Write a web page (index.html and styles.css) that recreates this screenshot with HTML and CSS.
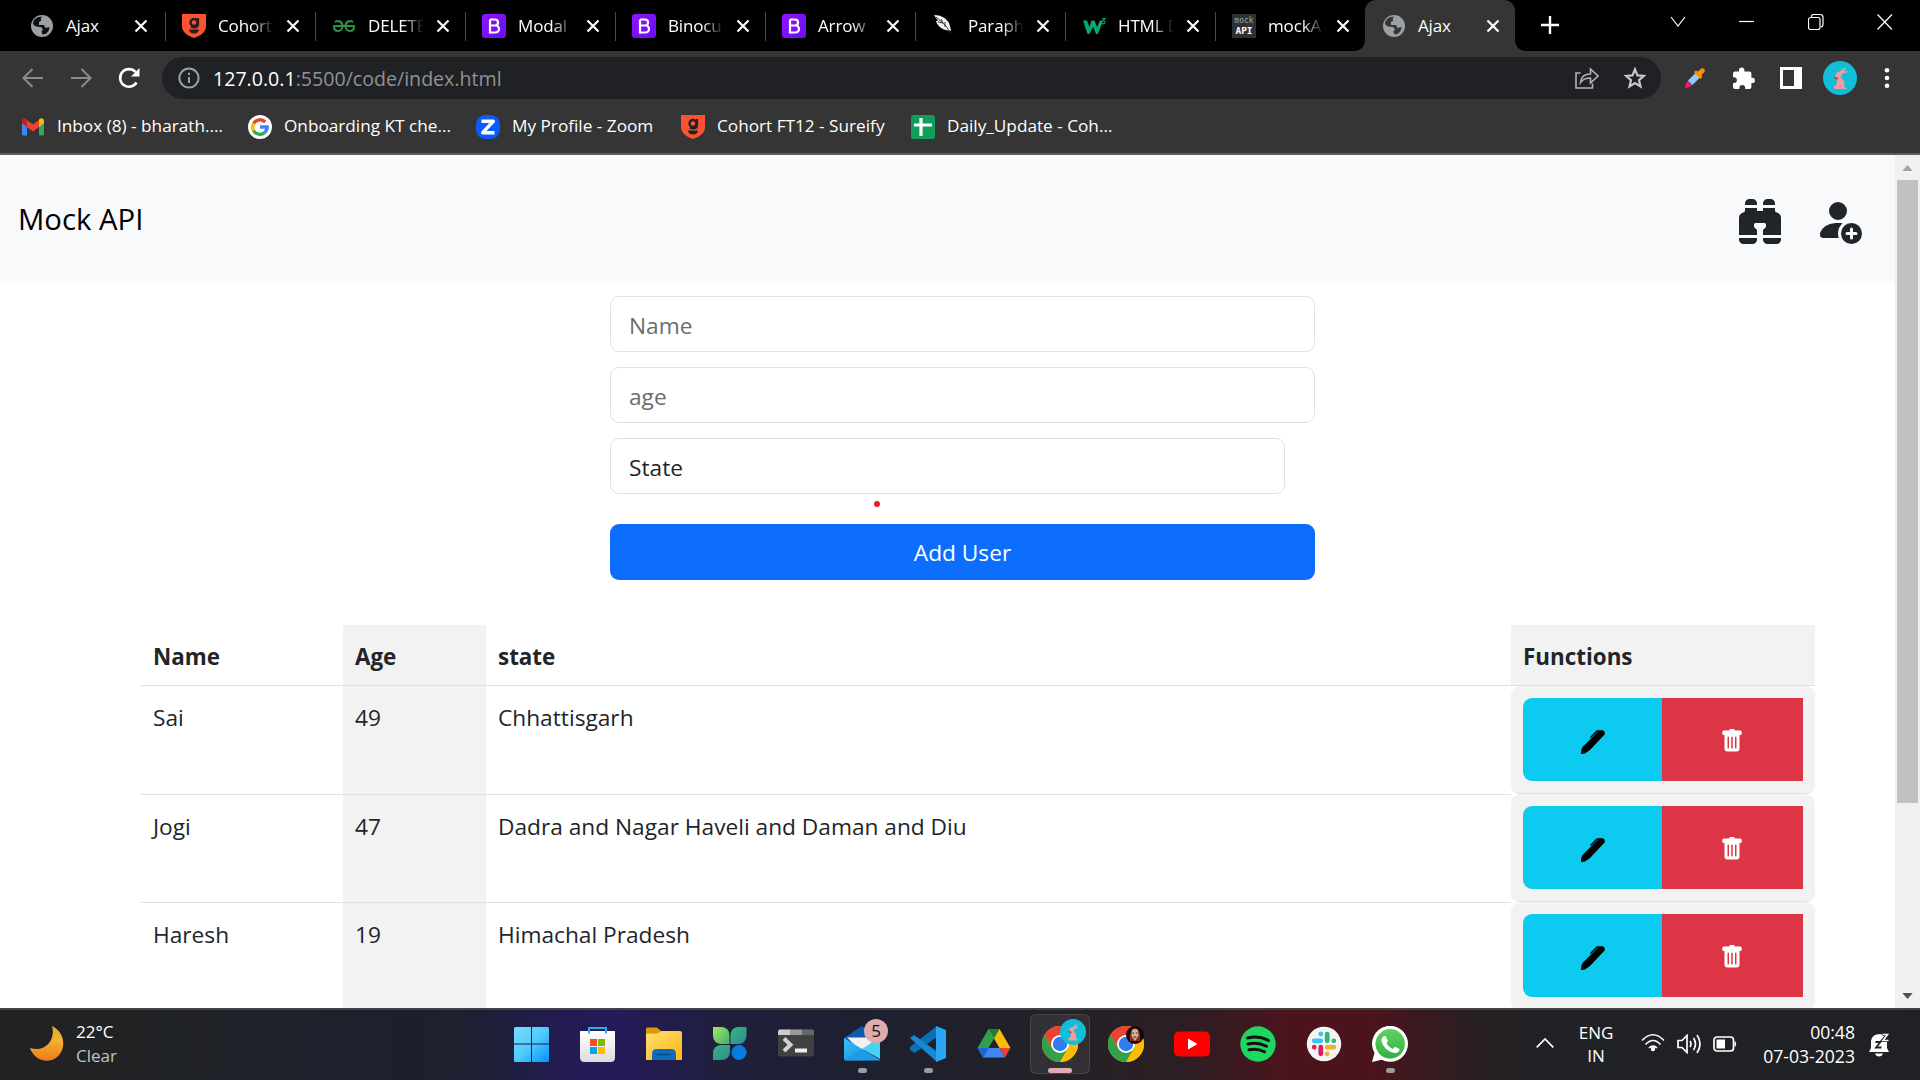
FILE: index.html
```html
<!DOCTYPE html>
<html lang="en">
<head>
<meta charset="utf-8">
<title>Ajax</title>
<link rel="stylesheet" href="styles.css">
</head>
<body>
<svg class="defs" aria-hidden="true">
  <defs>
    <linearGradient id="bs" x1="0" y1="0" x2="1" y2="1"><stop offset="0" stop-color="#9013fe"/><stop offset="1" stop-color="#6610f2"/></linearGradient>
    <linearGradient id="win" x1="0" y1="0" x2="1" y2="1"><stop offset="0" stop-color="#7fdcfc"/><stop offset=".5" stop-color="#4fcbfb"/><stop offset="1" stop-color="#0a8ffb"/></linearGradient>
    <linearGradient id="moon" x1="0" y1="0" x2="0" y2="1"><stop offset="0" stop-color="#dfa93a"/><stop offset=".4" stop-color="#f2b32e"/><stop offset="1" stop-color="#f07a1c"/></linearGradient>
    <linearGradient id="folder" x1="0" y1="0" x2="1" y2="1"><stop offset="0" stop-color="#ffdd74"/><stop offset="1" stop-color="#fcb912"/></linearGradient>
    <linearGradient id="leaf" x1="0" y1="0" x2="1" y2="1"><stop offset="0" stop-color="#a4e85c"/><stop offset="1" stop-color="#3fae70"/></linearGradient>
    <linearGradient id="leaf2" x1="0" y1="0" x2="1" y2="1"><stop offset="0" stop-color="#3cb878"/><stop offset="1" stop-color="#258a9a"/></linearGradient>
    <linearGradient id="mailf" x1="0" y1="0" x2="1" y2="1"><stop offset="0" stop-color="#35c3f5"/><stop offset="1" stop-color="#1583dd"/></linearGradient>
    <linearGradient id="bag" x1="0" y1="0" x2="0" y2="1"><stop offset="0" stop-color="#fff"/><stop offset="1" stop-color="#dcdcdc"/></linearGradient>
    <linearGradient id="wa" x1="0" y1="0" x2="0" y2="1"><stop offset="0" stop-color="#5fd164"/><stop offset="1" stop-color="#2fb242"/></linearGradient>
    <symbol id="globe" viewBox="0 0 24 24"><circle cx="12" cy="12" r="11" fill="#9aa0a6"/><path d="M13 3c-2 0-3 2-1.500 3.500L9 8v3h5l1.500 3 4-1c0 4-3 7.500-7 7.500l-1-3 1.500-2-2-2.500H6L3 10c0-4 4-8 10-7Z" fill="#000" opacity=".9"/><path d="M14 2.500l5 3.500-1 4-4-.5-1-3ZM4 12l5 1 2 3-1 4C6 19 4 16 4 12Z" fill="#9aa0a6"/></symbol>
    <symbol id="globe-active" viewBox="0 0 24 24"><circle cx="12" cy="12" r="11" fill="#9aa0a6"/><path d="M13 3c-2 0-3 2-1.500 3.500L9 8v3h5l1.500 3 4-1c0 4-3 7.500-7 7.500l-1-3 1.500-2-2-2.500H6L3 10c0-4 4-8 10-7Z" fill="#353535"/><path d="M14 2.500l5 3.500-1 4-4-.5-1-3ZM4 12l5 1 2 3-1 4C6 19 4 16 4 12Z" fill="#9aa0a6"/></symbol>
    <symbol id="shield" viewBox="0 0 24 24"><path d="M0 0h24v12c0 6-5 9.500-12 12C5 21.500 0 18 0 12Z" fill="#fb5330"/><g fill="none" stroke="#222"><circle cx="12" cy="8.500" r="3.500" stroke-width="2.400"/><path d="M16 4v6q0 3.500-4 3.500-2 0-3-.8" stroke-width="2.200"/></g><path d="M7 15.500h10q-.5 4-5 4t-5-4Z" fill="#222"/></symbol>
    <symbol id="gfg" viewBox="0 0 24 14"><path d="M1 7h22M10.500 7c0 3-2 5-4.500 5S2 10 2 7.500M3 3c3-2 7-1 7.500 4M13.500 7c0 3 2 5 4.500 5s4-2 4-4.500M21 3c-3-2-7-1-7.500 4" fill="none" stroke="#2f8d46" stroke-width="2.200"/></symbol>
    <symbol id="bootstrap" viewBox="0 0 24 24"><rect width="24" height="24" rx="3" fill="url(#bs)"/><path d="M8 5.500h5a3 3 0 0 1 0 6H8m0 0h5.500a3.500 3.500 0 0 1 0 7H8V5.500" fill="none" stroke="#fff" stroke-width="2.200"/></symbol>
    <symbol id="x" viewBox="0 0 14 14"><path d="M1.500 1.500l11 11m0-11l-11 11" stroke="#fff" stroke-width="2.200"/></symbol>
    <symbol id="pencil" viewBox="0 0 24 24"><path d="M0 24c0-4 .5-6 2.500-8L17.500 1 22 .5q2.500.5 1.500 4L9 20l-5 3.500Z" fill="#000"/><path d="M9.500 7.500L16 1h6" stroke="#000" stroke-width="1.300" fill="none"/></symbol>
    <symbol id="trash" viewBox="0 0 16 16"><path fill="#fff" d="M2.500 1a1 1 0 0 0-1 1v1a1 1 0 0 0 1 1H3v9a2 2 0 0 0 2 2h6a2 2 0 0 0 2-2V4h.5a1 1 0 0 0 1-1V2a1 1 0 0 0-1-1H10a1 1 0 0 0-1-1H7a1 1 0 0 0-1 1H2.500zm3 4a.5.5 0 0 1 .5.5v7a.5.5 0 0 1-1 0v-7a.5.5 0 0 1 .5-.5zM8 5a.5.5 0 0 1 .5.5v7a.5.5 0 0 1-1 0v-7A.5.5 0 0 1 8 5zm3 .5v7a.5.5 0 0 1-1 0v-7a.5.5 0 0 1 1 0z"/></symbol>
    <symbol id="rabbit" viewBox="0 0 34 34"><circle cx="17" cy="17" r="17" fill="#12bdd8"/><path d="M13 12.500Q14 10 17 10.500 20 6.500 23.500 7q-1 2-3 3l4.500.5q-2 2-5.500 2-.5 2-2 3 3.500 3.500 4 7l-.5 3.500 2.500.5v1.500H13Q10.500 28 10.800 26t2.700-2q-.5-3 1-4.500l-3-.8q1.500-.7 2.500-1.700l-2-2.500Z" fill="#f49aa2"/><path d="M11 15.500l5 1.500-3 2.500-1-1.500Z" fill="#a8505f"/></symbol>
    <symbol id="chrome" viewBox="0 0 36 36"><circle cx="18" cy="18" r="18" fill="#fbbc05"/><path d="M2.400 9A18 18 0 0 1 33.600 9H18L10.200 22.500Z" fill="#ea4335"/><path d="M2.400 9A18 18 0 0 0 18 36l8-13.500H10.200Z" fill="#34a047"/><path d="M18 9h15.600A18 18 0 0 1 18 36l7.800-13.500Z" fill="#fbbc05"/><circle cx="18" cy="18" r="9" fill="#fff"/><circle cx="18" cy="18" r="7.200" fill="#2f7cf0"/></symbol>
  </defs>
</svg>

<header class="tabs">
  <div class="tab"><svg class="fav"><use href="#globe"/></svg><span class="tab-title">Ajax</span><svg class="close"><use href="#x"/></svg></div>
  <div class="tab"><svg class="fav"><use href="#shield"/></svg><span class="tab-title">Cohort</span><svg class="close"><use href="#x"/></svg></div>
  <div class="tab"><svg class="fav gfg"><use href="#gfg"/></svg><span class="tab-title">DELETE</span><svg class="close"><use href="#x"/></svg></div>
  <div class="tab"><svg class="fav"><use href="#bootstrap"/></svg><span class="tab-title">Modal</span><svg class="close"><use href="#x"/></svg></div>
  <div class="tab"><svg class="fav"><use href="#bootstrap"/></svg><span class="tab-title">Binocu</span><svg class="close"><use href="#x"/></svg></div>
  <div class="tab"><svg class="fav"><use href="#bootstrap"/></svg><span class="tab-title">Arrow</span><svg class="close"><use href="#x"/></svg></div>
  <div class="tab"><svg class="fav" viewBox="0 0 24 24"><path d="M2 1c7 0 12 3 15 8l2 7-1 1-4-1c-5-1-9-5-10-9l2 0Z" fill="#f3f3f3"/><path d="M4 3l9 8 6 8M9 5l2 4M13 8v5M6 8l5 1" stroke="#333" stroke-width="1" fill="none"/></svg><span class="tab-title">Paraph</span><svg class="close"><use href="#x"/></svg></div>
  <div class="tab"><svg class="fav" viewBox="0 0 24 24"><path d="M1 6.500h4l2.500 6.500L9.500 6.500h3L15 13l3-6.500 3 0-5 13.500h-2l-3-7-3.500 7h-2Z" fill="#04aa6d"/><path d="M20 4.500h3l-2 2.300c3 0 2.500 4-1 2.700" fill="none" stroke="#04aa6d" stroke-width="1.100"/></svg><span class="tab-title">HTML D</span><svg class="close"><use href="#x"/></svg></div>
  <div class="tab"><span class="fav mock"><span>mock</span><b>API</b></span><span class="tab-title">mockA</span><svg class="close"><use href="#x"/></svg></div>
  <div class="tab active"><svg class="fav"><use href="#globe-active"/></svg><span class="tab-title">Ajax</span><svg class="close"><use href="#x"/></svg></div>
  <svg class="plus" viewBox="0 0 18 18"><path d="M9 0v18M0 9h18" stroke="#fff" stroke-width="2.400"/></svg>
  <div class="window-controls">
    <svg viewBox="0 0 16 16"><path d="M1 3l7 9 7-9" /></svg>
    <svg viewBox="0 0 16 16"><path d="M0 7.500h15"/></svg>
    <svg viewBox="0 0 16 16"><rect x=".5" y="3.500" width="11.500" height="12" rx="2"/><path d="M3.500 3.500V2.500Q3.500.5 6 .5h6q3 0 3 3v7q0 2-2 2.500"/></svg>
    <svg viewBox="0 0 16 16"><path d="M.5.500l14.500 15m0-15L.5 15.500"/></svg>
  </div>
</header>

<div class="toolbar">
  <div class="nav-row">
    <svg class="nav dim" viewBox="0 0 22 22"><path d="M21 11H2M10.500 2L1.500 11l9 9"/></svg>
    <svg class="nav dim" viewBox="0 0 22 22"><path d="M1 11h19M11.500 2l9 9-9 9"/></svg>
    <svg class="nav" viewBox="0 0 22 22"><path d="M18.500 15.500A8.800 8.800 0 1 1 17.500 5" stroke-width="2.600"/><path d="M21.500 1v8.500H13Z" fill="#fff" stroke="none"/></svg>
    <div class="omnibox">
      <svg class="info" viewBox="0 0 22 22"><circle cx="11" cy="11" r="9.600"/><path d="M11 10v6M11 5.800v2.200"/></svg>
      <span class="url"><b>127.0.0.1</b>:5500/code/index.html</span>
      <svg class="share" viewBox="0 0 24 22"><path d="M5.500 6H1v15h16.500v-4.500M5.500 15.500C6 10 9 7 15.500 7V2L23 9l-7.500 7v-5C11 11 8 12 5.500 15.500Z"/></svg>
      <svg class="star" viewBox="0 0 22 22"><path d="M11 2.300l2.500 6.100 6.400.5-4.900 4.200 1.500 6.300L11 16l-5.500 3.400L7 13.100 2.100 8.900l6.400-.5Z"/></svg>
    </div>
    <svg class="dropper" viewBox="0 0 20 20"><path d="M0 20l1-5 3-3 4 4-3 3Z" fill="#e91e63"/><path d="M3 12.500L10.500 5l4.500 4.500L7.500 17Z" fill="#90caf9"/><path d="M9 4l2-1.500 2 1L16 .7c3-1.500 4.500 1 3.500 3l-3 3.500.8 1.800-2 2Z" fill="#ff9100"/></svg>
    <svg class="puzzle" viewBox="0 0 22 22"><path d="M0 6.500Q0 4.500 2 4.500H6V3.200a2.700 2.700 0 0 1 5.400 0v1.300h5q2 0 2 2v4.300h.9a2.600 2.600 0 0 1 0 5.200h-.9V20q0 2-2 2h-4.200v-1a2.900 2.900 0 0 0-5.800 0v1H2q-2 0-2-2v-4h1a2.900 2.900 0 0 0 0-5.800H0Z" fill="#fff"/></svg>
    <svg class="panel" viewBox="0 0 22 22"><path d="M1.500 1.500h19v19h-19Z" fill="none" stroke="#fff" stroke-width="3"/><path d="M14 1h7.500v20H14Z" fill="#fff"/></svg>
    <svg class="avatar"><use href="#rabbit"/></svg>
    <svg class="dots" viewBox="0 0 6 22"><circle cx="3" cy="3.200" r="2.300"/><circle cx="3" cy="11" r="2.300"/><circle cx="3" cy="18.800" r="2.300"/></svg>
  </div>
  <div class="bookmarks">
    <span class="bookmark b1"><svg viewBox="0 0 24 24"><path d="M1 8v11q0 1.500 1.500 1.500H6V11Z" fill="#4285f4"/><path d="M23 8v11q0 1.500-1.500 1.500H18V11Z" fill="#34a853"/><path d="M18 5v7l5-3.800V6c0-3-3-3.500-4.500-2Z" fill="#fbbc04"/><path d="M6 12V5l6 4.500L18 5v7l-6 4.500Z" fill="#ea4335"/><path d="M1 6v2.200L6 12V5L5.500 4C4 2.500 1 3 1 6Z" fill="#c5221f"/></svg><span>Inbox (8) - bharath....</span></span>
    <span class="bookmark b2"><svg viewBox="0 0 24 24"><circle cx="12" cy="12" r="12" fill="#fff"/><g fill="none" stroke-width="3.300"><path d="M5.600 8.500A7.300 7.300 0 0 1 17.200 7" stroke="#ea4335"/><path d="M5.600 8.300a7.300 7.300 0 0 0 0 7.400" stroke="#fbbc05"/><path d="M5.500 15.500A7.300 7.300 0 0 0 16.800 17.500" stroke="#34a853"/><path d="M16.600 17.700A7.300 7.300 0 0 0 19.200 12H12" stroke="#4285f4"/></g></svg><span>Onboarding KT che...</span></span>
    <span class="bookmark b3"><svg viewBox="0 0 24 24"><rect width="24" height="24" rx="9.500" fill="#0b5cff"/><path d="M5.500 6.300h11.800L6.700 17.700h11.800" fill="none" stroke="#fff" stroke-width="3.400" stroke-linejoin="round"/></svg><span>My Profile - Zoom</span></span>
    <span class="bookmark b4"><svg><use href="#shield"/></svg><span>Cohort FT12 - Sureify</span></span>
    <span class="bookmark b5"><svg viewBox="0 0 24 24"><rect width="24" height="24" rx="2.500" fill="#109d58"/><path d="M10 3v18M3 10h18" stroke="#fff" stroke-width="3.200"/></svg><span>Daily_Update - Coh...</span></span>
  </div>
</div>

<div class="viewport">
  <main class="page">
    <nav class="navbar">
      <span class="brand">Mock API</span>
      <div class="nav-icons">
        <svg viewBox="0 0 16 16"><path d="M4.500 1A1.500 1.500 0 0 0 3 2.500V3h4v-.5A1.500 1.500 0 0 0 5.500 1h-1zM7 4v1h2V4h4v.882a.5.5 0 0 0 .276.447l.895.447A1.500 1.500 0 0 1 15 7.118V13H9v-1.500a.5.5 0 0 1 .146-.354l.854-.853V9.500a.5.5 0 0 0-.5-.5h-3a.5.5 0 0 0-.5.5v.793l.854.853A.5.5 0 0 1 7 11.500V13H1V7.118a1.500 1.500 0 0 1 .83-1.342l.894-.447A.5.5 0 0 0 3 4.882V4h4zM1 14v.5A1.500 1.500 0 0 0 2.500 16h3A1.500 1.500 0 0 0 7 14.500V14H1zm8 0v.5a1.500 1.500 0 0 0 1.500 1.500h3a1.500 1.500 0 0 0 1.500-1.500V14H9zm4-11H9v-.5A1.500 1.500 0 0 1 10.500 1h1A1.500 1.500 0 0 1 13 2.500V3z"/></svg>
        <svg viewBox="0 0 16 16"><path d="M12.500 16a3.500 3.500 0 1 0 0-7 3.500 3.500 0 0 0 0 7Zm.5-5v1h1a.5.5 0 0 1 0 1h-1v1a.5.5 0 0 1-1 0v-1h-1a.5.5 0 0 1 0-1h1v-1a.5.5 0 0 1 1 0Zm-2-6a3 3 0 1 1-6 0 3 3 0 0 1 6 0Z"/><path d="M2 13c0 1 1 1 1 1h5.256A4.493 4.493 0 0 1 8 12.500a4.490 4.490 0 0 1 1.544-3.393C9.077 9.038 8.564 9 8 9c-5 0-6 3-6 4Z"/></svg>
      </div>
    </nav>

    <form class="user-form">
      <input class="field" type="text" placeholder="Name">
      <input class="field" type="text" placeholder="age">
      <div class="select-wrap">
        <div class="field select">State</div>
        <i class="marker"></i>
      </div>
      <button class="submit" type="button">Add User</button>
    </form>

    <section class="table">
      <div class="row head"><div>Name</div><div class="shade">Age</div><div>state</div><div class="shade">Functions</div></div>
      <div class="row"><div>Sai</div><div class="shade">49</div><div>Chhattisgarh</div>
        <div class="actions"><button type="button" class="edit"><svg><use href="#pencil"/></svg></button><button type="button" class="delete"><svg><use href="#trash"/></svg></button></div></div>
      <div class="row"><div>Jogi</div><div class="shade">47</div><div>Dadra and Nagar Haveli and Daman and Diu</div>
        <div class="actions"><button type="button" class="edit"><svg><use href="#pencil"/></svg></button><button type="button" class="delete"><svg><use href="#trash"/></svg></button></div></div>
      <div class="row"><div>Haresh</div><div class="shade">19</div><div>Himachal Pradesh</div>
        <div class="actions"><button type="button" class="edit"><svg><use href="#pencil"/></svg></button><button type="button" class="delete"><svg><use href="#trash"/></svg></button></div></div>
    </section>
  </main>
  <div class="scrollbar">
    <svg class="arrow-up" viewBox="0 0 12 7"><path d="M6 0l6 7H0Z" fill="#a3a3a3"/></svg>
    <div class="thumb"></div>
    <svg class="arrow-down" viewBox="0 0 12 7"><path d="M0 0h12L6 7Z" fill="#505050"/></svg>
  </div>
</div>

<footer class="taskbar">
  <div class="weather">
    <svg viewBox="0 0 34 35"><path d="M22 0C37 7 37 28 22 34 12 37 3 31 0 22 15 27 26 14 22 0Z" fill="url(#moon)"/></svg>
    <div><div>22°C</div><div class="sky">Clear</div></div>
  </div>
  <div class="apps">
    <span class="app"><svg viewBox="0 0 36 36"><path d="M0 2.500Q0 1 1.500 1H17v16.500H0ZM18 1H33.500q1.500 0 1.500 1.500v15H18ZM0 18.500H17V36H1.500Q0 36 0 34.500ZM18 18.500h17v16q0 1.500-1.500 1.500H18Z" fill="url(#win)"/></svg></span>
    <span class="app"><svg viewBox="0 0 36 36"><path d="M0 5h35V31.500q0 4.500-4.500 4.500h-26Q0 36 0 31.500Z" fill="url(#bag)"/><path d="M9 7.500V2h17v5.500" fill="none" stroke="#25aef0" stroke-width="2"/><path d="M10 13h7v7h-7Z" fill="#f25022"/><path d="M18 13h7v7h-7Z" fill="#7fba00"/><path d="M10 21h7v7h-7Z" fill="#00a4ef"/><path d="M18 21h7v7h-7Z" fill="#ffb900"/></svg></span>
    <span class="app"><svg viewBox="0 0 36 36"><path d="M0 10V3q0-1.500 1.500-1.500H11l4 3.500v5Z" fill="#dc9a06"/><path d="M0 7.500h12L15.500 5H34q2 0 2 2v27H0Z" fill="url(#folder)"/><path d="M6 34v-6q0-5 5-5h14q5 0 5 5v6Z" fill="#0f6cbd"/><path d="M11 28.500h14" stroke="#0a4584" stroke-width="1.500"/></svg></span>
    <span class="app"><svg viewBox="0 0 36 36"><path d="M17.500 18H9a8 8 0 0 1-8-8V1h8.500a8 8 0 0 1 8 8Z" fill="url(#leaf)"/><path d="M18.500 18V9a8 8 0 0 1 8-8h8v9a8 8 0 0 1-8 8Z" fill="url(#leaf2)"/><path d="M1 34V27a8 8 0 0 1 8-8h9v7a8 8 0 0 1-8 8Z" fill="url(#leaf2)"/><circle cx="27" cy="26.500" r="7.500" fill="#087be0"/></svg></span>
    <span class="app"><svg viewBox="0 0 36 36"><rect y="3.500" width="36" height="27" rx="2" fill="#414141"/><path d="M0 9V5.500q0-2 2-2h10V9Z" fill="#ccc"/><path d="M12 3.500h12V9H12Z" fill="#999"/><path d="M24 3.500h10q2 0 2 2V9H24Z" fill="#666"/><path d="M6 12.500l6.500 6.200L6 25" fill="none" stroke="#d2d2d2" stroke-width="4"/><path d="M17 22.500h12v4H17Z" fill="#eee"/></svg></span>
    <span class="app dot"><svg viewBox="0 0 36 36"><path d="M0 12L18 0l18 12v10H0Z" fill="#0b5cb0"/><path d="M3 11.500h30L18 26Z" fill="#f1f1f1"/><path d="M0 12l36 22q-.5.500-2 .5H2q-2 0-2-2Z" fill="url(#mailf)"/><path d="M36 12v21L18 22.800Z" fill="#4bd0f3"/><path d="M0 34.200L18 22.800 36 34.200Z" fill="#1d9be6"/></svg><span class="badge">5</span></span>
    <span class="app dot"><svg viewBox="0 0 36 36"><path d="M27 0v11L4.500 27 0 24v-3Z" fill="#0a70b8"/><path d="M0 12l4-3 23 16.500V36Z" fill="#1589d3"/><path d="M26 0l10 4v28l-10 4Z" fill="#2aa6f2"/></svg></span>
    <span class="app"><svg viewBox="0 0 36 36"><path d="M12.500 3h11L12.500 22 7 31.500 1.500 22Z" fill="#2fa04b"/><path d="M12.500 3h11L34.500 22h-11L18 12.500Z" fill="#fbbc09"/><path d="M12.500 3h11L18 12.500Z" fill="#188038"/><path d="M7 31.500L12.500 22h11l5.500 9.500Z" fill="#4285f4"/><path d="M1.500 22h11L7 31.500Z" fill="#2163d0"/><path d="M23.500 22h11L29 31.500Z" fill="#ea4335"/></svg></span>
    <span class="app current"><svg><use href="#chrome"/></svg><svg class="profile big"><use href="#rabbit"/></svg></span>
    <span class="app"><svg><use href="#chrome"/></svg><svg class="profile" viewBox="0 0 18 18"><circle cx="9" cy="9" r="9" fill="#100a09"/><path d="M4 15Q3 3 9 2q6 1 5 13Z" fill="#a91e1c"/><path d="M6 4q3-2 6 0l.5 6L9 15 5.500 10Z" fill="#c7b6a2"/><path d="M6.500 7H8m2 0h1.500M7.500 11h3" stroke="#222"/></svg></span>
    <span class="app"><svg viewBox="0 0 36 36"><rect y="5.500" width="36" height="25" rx="5" fill="#f00"/><path d="M14 12.500l9.500 5.500-9.500 5.500Z" fill="#fff"/></svg></span>
    <span class="app"><svg viewBox="0 0 36 36"><circle cx="18" cy="18" r="17.700" fill="#1ed760"/><path d="M7.500 12q11-3 21 2.500M8 18q10-2.500 18.500 2.300M9 23.800q8-2 15.500 2" fill="none" stroke="#111" stroke-width="3" stroke-linecap="round"/></svg></span>
    <span class="app"><svg viewBox="0 0 36 36"><circle cx="18" cy="18" r="17.200" fill="#f5f4f5"/><g stroke-width="4.800" stroke-linecap="round"><path d="M14.800 8v.01M8.200 14.800h6.600" stroke="#36c5f0"/><path d="M21.200 8.200v6.600M27.800 14.800v.01" stroke="#2eb67d"/><path d="M21.200 21.200h6.600M21.200 27.800v.01" stroke="#ecb22e"/><path d="M14.800 21.200v6.600M8.200 21.200v.01" stroke="#e01e5a"/></g></svg></span>
    <span class="app dot"><svg viewBox="0 0 36 36"><path d="M0 36l2.500-9A18 18 0 1 1 9.500 33.700Z" fill="#fff"/><circle cx="18.200" cy="17.800" r="14.700" fill="url(#wa)"/><path d="M9.500 13.500q1-4 4-3.500l2.500 5-1.500 2.500q2.500 4 6.500 5.500l2-2.200 4.500 2.200q0 4-4.500 4C16 26.500 9 19 9.500 13.500Z" fill="#fff"/></svg></span>
  </div>
  <div class="tray">
    <svg class="chev" viewBox="0 0 18 10"><path d="M.7 9.300L9 1l8.300 8.300"/></svg>
    <div class="lang"><div>ENG</div><div>IN</div></div>
    <svg class="wifi" viewBox="0 0 24 20"><path d="M1 7.500q11-11.500 22 0M4.500 11.500q7.500-8 15 0M8 15q4-4 8 0"/><circle cx="12" cy="16" r="2.200" class="solid"/></svg>
    <svg class="sound" viewBox="0 0 24 20"><path d="M1 6.500h4L10 1.500v17l-5-5H1ZM13 7q2 3 0 6M16.500 4q4 6 0 12M20 1q6 9 0 18"/></svg>
    <svg class="battery" viewBox="0 0 24 16"><rect x="1" y="1" width="19.500" height="14" rx="3"/><path d="M3.500 3.500h8.500v9H3.500ZM21.500 5.500h1q1.500 2.500 0 5h-1Z" class="solid"/></svg>
    <div class="clock"><div>00:48</div><div>07-03-2023</div></div>
    <svg class="bell" viewBox="0 0 22 24"><path d="M1 19l2-4V8q1-7 9-7 6 1 7 6v8l2 4Z" fill="#fff"/><path d="M7 20.500h8q-1 3-4 3t-4-3Z" fill="#fff"/><path d="M7.500 9h5l-4.500 5.500h5.500" fill="none" stroke="#202124" stroke-width="1.800"/><path d="M14.500 1h6l-5 6h5.500" fill="none" stroke="#202124" stroke-width="4"/><path d="M14.500 1.500h5l-4.500 6h5.500" fill="none" stroke="#fff" stroke-width="1.600"/></svg>
  </div>
</footer>
</body>
</html>
```
FILE: styles.css
```css
* { box-sizing: border-box; }
body {
  margin: 0;
  width: 1920px;
  height: 1080px;
  overflow: hidden;
  display: flex;
  flex-direction: column;
  font-family: "Open Sans", "Noto Sans", sans-serif;
  background: #fff;
}
svg { flex: none; display: block; }
.defs { position: absolute; width: 0; height: 0; }

/* tab strip */
.tabs { height: 51px; flex: none; display: flex; background: #000; padding-left: 14px; color: #fff; }
.tab { position: relative; width: 150px; height: 51px; flex: none; display: flex; align-items: center; padding-left: 17px; }
.tab:first-child { width: 151px; padding-left: 16px; }
.tab::after { content: ""; position: absolute; right: -1px; top: 12px; width: 1px; height: 29px; background: #4a4a4a; }
.tab:nth-child(9)::after, .tab.active::after { display: none; }
.fav { width: 24px; height: 24px; margin-top: 1px; }
.gfg { height: 14px; }
.tab-title {
  width: 57px; margin-left: 12px; overflow: hidden; white-space: nowrap;
  font-size: 17px; line-height: 26px; letter-spacing: -.15px;
  -webkit-mask-image: linear-gradient(to right, #000 60%, transparent 98%);
  mask-image: linear-gradient(to right, #000 60%, transparent 98%);
}
.tab:first-child .tab-title, .tab.active .tab-title { -webkit-mask-image: none; mask-image: none; }
.close { width: 14px; height: 14px; margin-left: 11px; }
.tab.active { background: #353535; border-radius: 11px 11px 0 0; }
.tab.active::before {
  content: ""; position: absolute; left: -10px; right: -10px; bottom: 0; height: 10px;
  background:
    radial-gradient(circle at 0 0, transparent 9.500px, #353535 10px) left / 10px 10px no-repeat,
    radial-gradient(circle at 100% 0, transparent 9.500px, #353535 10px) right / 10px 10px no-repeat;
}
.mock {
  background: #2f3032; display: flex; flex-direction: column; align-items: center; justify-content: center;
  font: 8px/10px "DejaVu Sans Mono", monospace; color: #9aa; flex: none;
}
.mock b { color: #fff; font-size: 9.500px; }
.plus { width: 18px; height: 18px; margin: 16px 0 0 26px; }
.window-controls { display: flex; gap: 53px; margin: 14px 27px 0 auto; }
.window-controls svg { width: 16px; height: 16px; fill: none; stroke: #fff; stroke-width: 1.200; }

/* toolbar */
.toolbar { height: 104px; flex: none; background: #353535; border-bottom: 2px solid #5e5e5e; color: #fff; }
.nav-row { height: 54px; display: flex; align-items: center; padding: 0 30px 0 22px; }
.nav { width: 22px; height: 22px; margin-right: 26px; fill: none; stroke: #fff; stroke-width: 2; }
.nav.dim { stroke: #8b8b8b; }
.nav:nth-child(3) { margin-right: 23px; }
.omnibox { width: 1500px; height: 42px; border-radius: 21px; background: #202124; display: flex; align-items: center; padding: 0 15px 0 16px; margin-left: -1px; }
.info { width: 22px; height: 22px; margin-right: 13px; fill: none; stroke: #9aa0a6; stroke-width: 2; }
.url { flex: 1; font-size: 19.600px; color: #8f9296; padding-top: 1px; }
.url b { font-weight: 400; color: #fff; }
.share { width: 24px; height: 22px; margin-right: 25px; fill: none; stroke: #b4b4b4; stroke-width: 1.600; }
.star { width: 22px; height: 22px; fill: none; stroke: #c8c8c8; stroke-width: 2.200; }
.dropper { width: 20px; height: 20px; margin-left: 24px; }
.puzzle { width: 22px; height: 22px; margin-left: 28px; }
.panel { width: 22px; height: 22px; margin-left: 25px; }
.avatar { width: 34px; height: 34px; margin-left: 21px; }
.dots { width: 6px; height: 22px; margin-left: 27px; fill: #fff; }
.bookmarks { display: flex; height: 43px; align-items: center; padding-left: 21px; font-size: 17.200px; white-space: nowrap; }
.bookmark { display: flex; align-items: center; gap: 12px; }
.bookmark svg { width: 24px; height: 24px; }
.bookmark span { padding-bottom: 2px; }
.b1 { width: 227px; } .b2 { width: 228px; } .b3 { width: 205px; } .b4 { width: 230px; }

/* page */
.viewport { height: 853px; flex: none; display: flex; overflow: hidden; }
.page { width: 1895px; height: 853px; overflow: hidden; color: #212529; font-size: 22.700px; }
.navbar { height: 126px; background: #f8f9fb; display: flex; align-items: center; justify-content: space-between; padding: 0 33px 0 18px; }
.brand { font-size: 29.300px; color: #000; padding-top: 2px; }
.nav-icons { display: flex; gap: 30px; margin-top: 4px; }
.nav-icons svg { width: 48px; height: 48px; fill: #212529; }
.user-form { width: 705px; margin: 15px 0 0 610px; display: flex; flex-direction: column; gap: 15px; }
.field {
  width: 100%; height: 56px; padding: 2px 18px 0; border: 1px solid #dee2e6; border-radius: 9px;
  background: #fff; font: inherit; color: #212529; outline: none;
}
.field::placeholder { color: #696d70; opacity: 1; }
.select { width: 675px; line-height: 54px; }
.select-wrap { position: relative; height: 71px; }
.marker { position: absolute; left: 264px; top: 63px; width: 6px; height: 6px; border-radius: 50%; background: #ed1c24; }
.submit { height: 56px; border: 0; border-radius: 9px; background: #0d6efd; color: #fff; font: inherit; padding: 1px 0 0; }

.table { width: 1674px; margin: 45px 0 0 141px; }
.row { display: grid; grid-template-columns: 202px 143px 1025px 304px; height: 108px; line-height: 36px; }
.row > div { padding: 14px 12px 0; border-bottom: 1px solid #dee2e6; }
.row.head { height: 61px; font-weight: 700; font-size: 22.400px; }
.row:nth-child(2) { height: 109px; }
.row > .shade { background: #f2f2f2; border-bottom-color: #dfe0e1; }
.row > .actions { display: flex; height: 108px; padding: 12px; background: #f2f2f2; border-radius: 9px; border-bottom-color: #dfe0e1; }
.row:nth-child(n+3) > .actions { margin-top: -1px; }
.actions button { height: 83px; border: 0; padding: 0; display: flex; align-items: center; justify-content: center; }
.edit { width: 139px; background: #0dcaf0; border-radius: 9px 0 0 9px; }
.delete { width: 141px; background: #dc3545; }
.actions svg { width: 24px; height: 24px; margin-top: 4px; }
.delete svg { margin: 2px 1px 0 0; }

.scrollbar { width: 25px; background: #f1f1f1; display: flex; flex-direction: column; align-items: center; padding: 10px 0 9px; }
.scrollbar svg { width: 11px; height: 6px; }
.thumb { width: 21px; height: 623px; margin: 9px 0 auto; background: #c1c1c1; }

/* taskbar */
.taskbar {
  position: relative; height: 72px; flex: none; display: flex; border-top: 2px solid #424247; color: #fff;
  background: linear-gradient(to right, #222222 0, #202225 150px, #1d212c 330px, #1c2030 470px, #231b55 570px, #241b58 620px, #1f1f3c 720px, #1d2030 860px, #222128 1040px, #2b1f23 1180px, #4b141d 1290px, #4b141c 1370px, #291f22 1470px, #212226 1540px, #202124 1920px);
}
.weather { width: 511px; display: flex; padding-left: 30px; }
.weather svg { width: 34px; height: 35px; margin: 16px 12px 0 0; }
.weather, .clock, .lang { font-size: 17px; line-height: 24px; }
.weather > div, .clock, .lang { padding-top: 10px; }
.sky { color: #c3c3c3; }
.apps { display: flex; gap: 6px; margin-left: -9px; }
.app { position: relative; width: 60px; height: 60px; margin-top: 4px; padding: 12px; border-radius: 6px; }
.app > svg { width: 36px; height: 36px; }
.app.dot::after { content: ""; position: absolute; left: 26px; top: 54px; width: 9px; height: 5px; border-radius: 3px; background: #9b9ba1; }
.app.current { background: rgba(255,255,255,.07); border: 1px solid rgba(255,255,255,.1); padding: 11px; }
.app.current::after { content: ""; position: absolute; left: 17px; top: 53px; width: 24px; height: 5px; border-radius: 3px; background: #e0adb1; }
.badge { position: absolute; left: 32px; top: 5px; width: 24px; height: 24px; border-radius: 50%; background: #dfabad; color: #111; font-size: 17px; line-height: 24px; text-align: center; }
.app > .profile { position: absolute; left: 30px; top: 12px; width: 18px; height: 18px; }
.app > .profile.big { left: 29px; top: 4px; width: 26px; height: 26px; }
.tray { position: absolute; left: 1536px; top: 0; width: 384px; display: flex; }
.tray svg { fill: none; stroke: #fff; stroke-width: 1.700; }
.tray svg .solid { fill: #fff; stroke: none; }
.chev { width: 18px; height: 10px; margin-top: 28px; }
.lang { width: 84px; text-align: center; padding-top: 11px; margin: 0 3px 0 0; line-height: 23px; }
.wifi { width: 24px; height: 20px; margin-top: 23px; }
.sound { width: 24px; height: 20px; margin: 24px 12px 0; }
.battery { width: 24px; height: 16px; margin-top: 26px; }
.clock { width: 118px; font-size: 17.600px; text-align: right; white-space: nowrap; }
.tray .bell { width: 22px; height: 24px; margin: 23px 0 0 13px; stroke: none; }
```
